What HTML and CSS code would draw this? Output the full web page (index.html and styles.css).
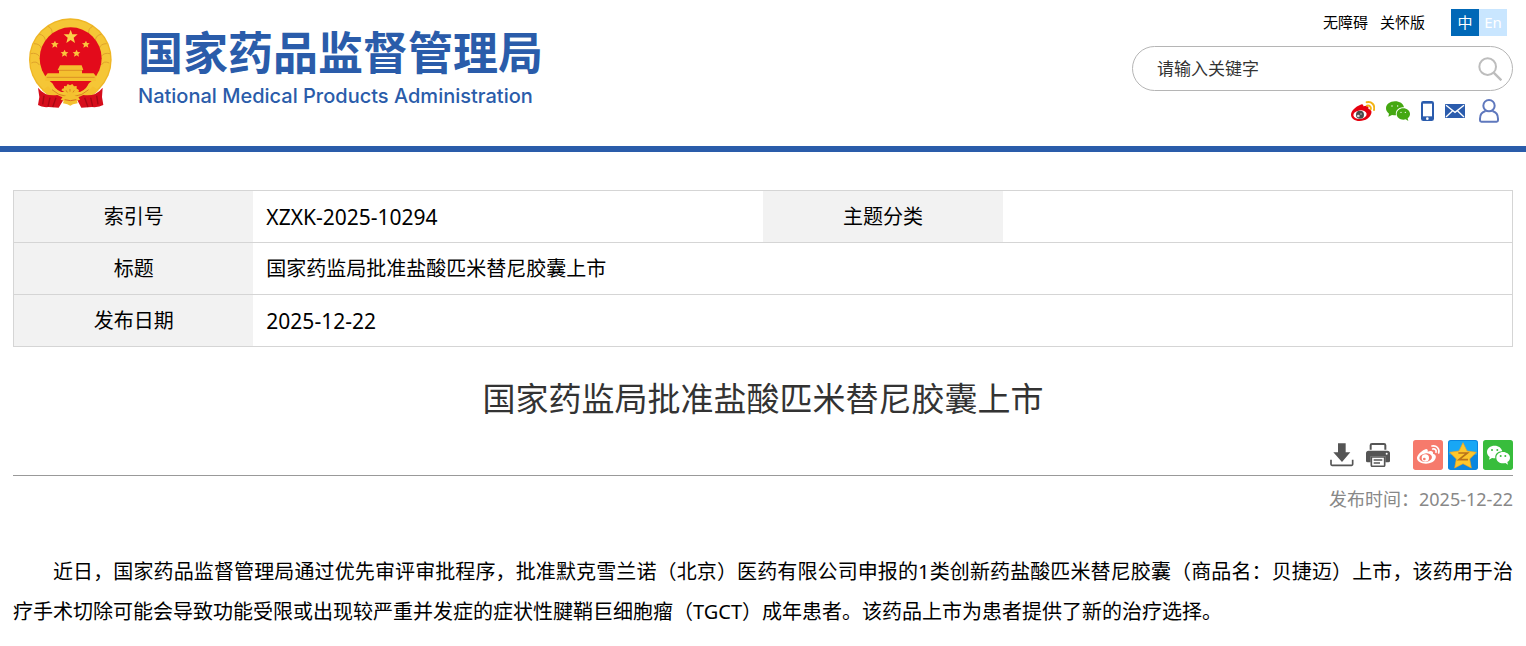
FILE: index.html
```html
<!DOCTYPE html>
<html lang="zh-CN">
<head>
    <meta charset="UTF-8">
    <meta name="viewport" content="width=device-width, initial-scale=1.0">
    <title>国家药监局批准盐酸匹米替尼胶囊上市</title>
    <link rel="stylesheet" href="styles.css">
</head>
<body>
    <header class="header">
        <a href="#" class="logo">
            <svg class="emblem" width="84" height="92" viewBox="24 20 252 276">
                <circle cx="151" cy="148" r="124" fill="#efb625"/>
                <circle cx="151" cy="148" r="120" fill="#f5c636"/>
                <g fill="none" stroke="#e0a32c" stroke-width="3">
                    <path d="M34 158q16-8 24 6M32 130q18-4 26 8M42 100q18 0 22 14M58 72q16 2 18 18M84 48q14 6 12 22M268 158q-16-8-24 6M270 130q-18-4-26 8M260 100q-18 0-22 14M244 72q-16 2-18 18M218 48q-14 6-12 22"/>
                </g>
                <circle cx="152" cy="144" r="93" fill="#e30b1b"/>
                <path d="M152 58l5 14h16l-12 10 4 16-13-9-13 9 4-16-12-10h16z" fill="#fbd04a"/>
                <path d="M105 91l3 7 8 1-6 5 2 8-7-4-8 4 2-8-6-5 8-1zM198 91l3 7 8 1-6 5 2 8-7-4-8 4 2-8-6-5 8-1zM134 118l3 7 8 1-6 5 2 8-7-4-8 4 2-8-6-5 8-1zM170 118l3 7 8 1-6 5 2 8-7-4-8 4 2-8-6-5 8-1z" fill="#fbc53c"/>
                <path d="M120 165h65l5 14h-4v10h35l9 11h-2v12H76v-12h-2l9-11h34v-10h-4z" fill="#f4c02f"/>
                <path d="M116 180h71M80 201h144" stroke="#dc9124" stroke-width="3"/>
                <path d="M96 213h112q-6 24-28 32h-56q-22-8-28-32z" fill="#e30b1b"/>
                <path d="M124 240q2-6 8-6l0-7 7 1 4-7 7 4 7-4 5 7 8-1v8q6 1 8 8l-28 12z" fill="#f4c02f"/>
                <path d="M84 228q18 24 46 24h42q28 0 46-24l18 12q-20 24-56 24h-56q-36 0-58-24z" fill="#f4c02f"/>
                <path d="M138 240l4 6M150 236v8M163 240l-4 6M96 238q20 18 42 20M206 238q-20 18-42 20" fill="none" stroke="#d98220" stroke-width="3"/>
                <path d="M54 232q22 28 58 22l18 8q22 8 42 0l18-8q36 6 58-22l-2 28 4 24q-14 8-34 6l-32 2-14-26q-18 6-38 0l-16 26-30-2q-20 2-32-6l4-24z" fill="#d60d1c"/>
                <path d="M72 256l-4 26M90 262l-6 26M108 262l-10 28M230 256l4 26M212 262l6 26M194 262l10 28" stroke="#a80713" stroke-width="4"/>
                <path d="M128 260l16-6h14l17 6 5 8-9 3 2 8-14 3-8 4-9-4-13-3 2-8-9-3z" fill="#f4c02f"/>
                <path d="M134 268q17 6 35 0" fill="none" stroke="#d96b1d" stroke-width="3"/>
            </svg>
            <span class="logo-text">
                <span class="logo-cn">国家药品监督管理局</span>
                <span class="logo-en">National Medical Products Administration</span>
            </span>
        </a>

        <div class="header-tools">
            <nav class="top-links">
                <a href="#">无障碍</a>
                <a href="#">关怀版</a>
                <span class="lang">
                    <a href="#" class="lang-item active">中</a>
                    <a href="#" class="lang-item">En</a>
                </span>
            </nav>
            <form class="search">
                <input type="text" class="search-input" placeholder="请输入关键字" aria-label="请输入关键字">
                <button type="button" class="search-btn" aria-label="搜索">
                    <svg width="24" height="24" viewBox="0 0 72 72" fill="none" stroke="#bdbdbd" stroke-width="6">
                        <circle cx="29" cy="29" r="25"/>
                        <path d="M47 47l23 23" stroke-width="7"/>
                    </svg>
                </button>
            </form>
            <div class="social">
                <a href="#" aria-label="微博">
                    <svg width="24" height="20" viewBox="0 0 72 60">
                        <path d="M27 12c6-4 11-2 10 4 9-4 18-2 15 7 8 2 11 7 9 14-3 13-17 23-35 23C11 60 0 52 0 41c0-11 15-25 27-29z" fill="#e6000f"/>
                        <ellipse cx="27" cy="41" rx="20" ry="13" fill="#fff" transform="rotate(-8 27 41)"/>
                        <circle cx="27" cy="41" r="12" fill="#4b4b4b"/>
                        <circle cx="22" cy="45" r="4" fill="#ddd"/>
                        <circle cx="30" cy="39" r="2" fill="#ddd"/>
                        <path d="M47 4c14-4 26 8 22 23M48 14c8-2 13 4 11 11" fill="none" stroke="#f3b517" stroke-width="6" stroke-linecap="round"/>
                    </svg>
                </a>
                <a href="#" aria-label="微信">
                    <svg width="24" height="20" viewBox="0 0 72 60">
                        <path d="M27 1C12 1 0 10 0 22c0 7 4 12 9 16l-2 9 11-5c4 1 8 1 12 1C27 29 38 17 54 19 52 8 41 1 27 1z" fill="#45a812"/>
                        <path d="M52 22c-12 0-20 8-20 17 0 10 9 17 20 17 3 0 5 0 7-1l8 5-2-8c4-3 7-8 7-13 0-9-9-17-20-17z" fill="#45a812"/>
                        <g fill="#fff"><circle cx="18" cy="15" r="2"/><circle cx="35" cy="15" r="2"/><circle cx="45" cy="34" r="2"/><circle cx="58" cy="34" r="2"/></g>
                    </svg>
                </a>
                <a href="#" aria-label="手机">
                    <svg width="13" height="20" viewBox="0 0 39 60">
                        <rect width="39" height="60" rx="7" fill="#2b5cad"/>
                        <path d="M6 8h27v38H6z" fill="#fff"/>
                        <circle cx="19" cy="53" r="4" fill="#fff"/>
                    </svg>
                </a>
                <a href="#" aria-label="邮箱">
                    <svg width="20" height="14" viewBox="0 0 60 42">
                        <rect width="60" height="42" rx="2" fill="#2b5cad"/>
                        <path d="M3 4l27 21L57 4M3 39l19-18M57 39L38 21" fill="none" stroke="#fff" stroke-width="4"/>
                    </svg>
                </a>
                <a href="#" aria-label="个人中心">
                    <svg width="24" height="24" viewBox="-9 -1 72 72" fill="none" stroke="#5f78bd" stroke-width="6">
                        <circle cx="30" cy="19" r="17"/>
                        <path d="M20 35C8 38 3 46 3 58v5q0 4 4 4h46q4 0 4-4v-5C57 46 52 38 40 35"/>
                    </svg>
                </a>
            </div>
        </div>
    </header>

    <main class="content">
        <table class="info-table">
            <tr>
                <th scope="row">索引号</th>
                <td class="code">XZXK-2025-10294</td>
                <th scope="row">主题分类</th>
                <td></td>
            </tr>
            <tr>
                <th scope="row">标题</th>
                <td colspan="3">国家药监局批准盐酸匹米替尼胶囊上市</td>
            </tr>
            <tr>
                <th scope="row">发布日期</th>
                <td colspan="3" class="code">2025-12-22</td>
            </tr>
        </table>

        <article>
            <h1 class="title">国家药监局批准盐酸匹米替尼胶囊上市</h1>

            <div class="toolbar">
                <button type="button" class="tool-btn" aria-label="下载">
                    <svg width="24" height="24" viewBox="0 0 72 72">
                        <path d="M24 1h23v27h14L36 57 10 28h14z" fill="#555"/>
                        <path d="M3 50v14q0 3 3 3h59q3 0 3-3V50" fill="none" stroke="#555" stroke-width="5"/>
                    </svg>
                </button>
                <button type="button" class="tool-btn" aria-label="打印">
                    <svg width="24" height="24" viewBox="0 0 72 72">
                        <path d="M14 20V7q0-4 4-4h36q4 0 4 4v13" fill="none" stroke="#555" stroke-width="6"/>
                        <path d="M8 23h56q8 0 8 8v23q0 4-5 4h-9V40H14v18H5q-5 0-5-4V31q0-8 8-8z" fill="#555"/>
                        <circle cx="62" cy="32" r="3" fill="#fff"/>
                        <path d="M16 42h40v25q0 3-3 3H19q-3 0-3-3z" fill="#fff" stroke="#555" stroke-width="5"/>
                        <path d="M23 51h26M23 60h19" stroke="#555" stroke-width="5"/>
                    </svg>
                </button>
                <div class="share">
                    <a href="#" aria-label="分享到微博">
                        <svg width="30" height="30" viewBox="0 0 90 90">
                            <rect width="90" height="90" rx="8" fill="#f67a6c"/>
                            <path d="M34 29c7-4 12-1 10 6 9-4 18-3 16 6 8 2 10 7 8 13-3 11-16 17-29 17-15 0-27-7-27-17 0-9 13-21 22-25z" fill="#fff"/>
                            <ellipse cx="38" cy="53" rx="19" ry="13" fill="#f67a6c" transform="rotate(-8 38 53)"/>
                            <circle cx="37" cy="54" r="11" fill="#fff"/>
                            <circle cx="34" cy="57" r="4" fill="#f67a6c"/>
                            <path d="M57 18c13-3 24 8 20 21M59 27c7-2 12 4 10 10" fill="none" stroke="#fff" stroke-width="5" stroke-linecap="round"/>
                        </svg>
                    </a>
                    <a href="#" aria-label="分享到QQ空间">
                        <svg width="30" height="30" viewBox="0 0 90 90">
                            <rect width="90" height="90" rx="8" fill="#0a86df"/>
                            <path d="M8 3h74q5 0 5 5v36H3V8q0-5 5-5z" fill="#18a7f5"/>
                            <path d="M45 8l12 25 28 4-20 20 5 27-25-13-25 13 5-27L5 37l28-4z" fill="#fdc72c" stroke="#f5a31a" stroke-width="2" stroke-linejoin="round"/>
                            <path d="M31 39h27L33 59h27" fill="none" stroke="#b9731a" stroke-width="5"/>
                        </svg>
                    </a>
                    <a href="#" aria-label="分享到微信">
                        <svg width="30" height="30" viewBox="0 0 90 90">
                            <rect width="90" height="90" rx="8" fill="#38bd3c"/>
                            <path d="M35 17c-13 0-23 8-23 19 0 7 3 11 8 15l-2 8 9-5c4 1 7 1 10 1-2-12 8-22 21-21-2-10-11-17-23-17z" fill="#fff"/>
                            <path d="M60 36c-11 0-20 7-20 17s9 17 20 17c3 0 5 0 7-1l8 5-2-8c5-3 8-8 8-13 0-10-10-17-21-17z" fill="#fff"/>
                            <g fill="#38bd3c"><circle cx="27" cy="30" r="3"/><circle cx="43" cy="30" r="3"/><circle cx="53" cy="48" r="3"/><circle cx="67" cy="48" r="3"/></g>
                        </svg>
                    </a>
                </div>
            </div>

            <p class="date">发布时间：2025-12-22</p>

            <p class="text">近日，国家药品监督管理局通过优先审评审批程序，批准默克雪兰诺（北京）医药有限公司申报的1类创新药盐酸匹米替尼胶囊（商品名：贝捷迈）上市，该药用于治疗手术切除可能会导致功能受限或出现较严重并发症的症状性腱鞘巨细胞瘤（TGCT）成年患者。该药品上市为患者提供了新的治疗选择。</p>
        </article>
    </main>
</body>
</html>
```

FILE: styles.css
```css
* {
    margin: 0;
    padding: 0;
    box-sizing: border-box;
}

body {
    background: #fff;
    color: #000;
    font-family: "Noto Sans", "Noto Sans CJK SC", sans-serif;
    font-size: 20px;
}

a {
    color: inherit;
    text-decoration: none;
}

svg {
    display: block;
}

button {
    background: none;
    border: none;
    cursor: pointer;
}

.header {
    display: flex;
    justify-content: space-between;
    align-items: flex-start;
    padding: 9px 13px 23px 28px;
    border-bottom: 6px solid #2a5caa;
}

.logo {
    display: flex;
    align-items: flex-start;
    gap: 26px;
    padding-top: 8px;
    color: #2a5caa;
}

.logo-text {
    display: flex;
    flex-direction: column;
    padding-top: 9px;
}

.logo-cn {
    font-size: 45px;
    font-weight: bold;
    line-height: 54px;
}

.logo-en {
    font-family: Inter, sans-serif;
    font-size: 20px;
    font-weight: 500;
    line-height: 32px;
}

.header-tools {
    width: 381px;
}

.top-links {
    display: flex;
    justify-content: flex-end;
    align-items: center;
    gap: 12px;
    padding-right: 6px;
    font-size: 15px;
    line-height: 27px;
}

.lang {
    display: flex;
    margin-left: 14px;
}

.lang-item {
    width: 28px;
    background: #c9e6ff;
    color: #fff;
    text-align: center;
}

.lang-item.active {
    background: #0068b7;
}

.search {
    display: flex;
    align-items: center;
    height: 45px;
    margin-top: 10px;
    padding: 0 10px 0 24px;
    border: 1px solid #b5b5b5;
    border-radius: 23px;
}

.search-input {
    flex: 1;
    min-width: 0;
    border: none;
    outline: none;
    background: none;
    font-family: inherit;
    font-size: 17px;
}

.search-input::placeholder {
    color: #333;
    opacity: 1;
}

.social {
    display: flex;
    justify-content: flex-end;
    align-items: center;
    gap: 11px;
    margin-top: 8px;
    padding-right: 13px;
}

.content {
    padding: 38px 13px 0;
}

.info-table {
    width: 100%;
    table-layout: fixed;
    border: 1px solid #d5d5d5;
    border-collapse: collapse;
}

.info-table tr {
    border-bottom: 1px solid #d5d5d5;
}

.info-table th,
.info-table td {
    height: 52px;
    line-height: 30px;
}

.info-table th {
    width: 16%;
    background: #f2f2f2;
    font-weight: normal;
    text-align: center;
}

.info-table td {
    width: 34%;
    padding: 0 13px;
}

.info-table .code {
    font-size: 21px;
}

.title {
    margin-top: 27px;
    color: #333;
    font-size: 33px;
    font-weight: normal;
    line-height: 50px;
    text-align: center;
}

.toolbar {
    display: flex;
    justify-content: flex-end;
    align-items: center;
    gap: 12px;
    margin-top: 16px;
    padding-bottom: 5px;
    border-bottom: 1px solid #999;
}

.share {
    display: flex;
    gap: 5px;
    margin-left: 11px;
}

.date {
    margin-top: 8px;
    color: #888;
    font-size: 18px;
    line-height: 30px;
    text-align: right;
}

.text {
    margin-top: 38px;
    line-height: 40px;
    text-align: justify;
    text-indent: 2em;
}
```
